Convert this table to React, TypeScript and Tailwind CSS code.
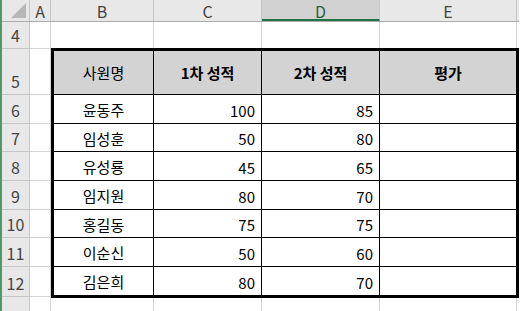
const rows = [
  { n: "6", name: "윤동주", a: 100, b: 85, h: "h-[29px]" },
  { n: "7", name: "임성훈", a: 50, b: 80, h: "h-[28px]" },
  { n: "8", name: "유성룡", a: 45, b: 65, h: "h-[29px]" },
  { n: "9", name: "임지원", a: 80, b: 70, h: "h-[29px]" },
  { n: "10", name: "홍길동", a: 75, b: 75, h: "h-[28px]" },
  { n: "11", name: "이순신", a: 50, b: 60, h: "h-[29px]" },
  { n: "12", name: "김은희", a: 80, b: 70, h: "h-[28px]" },
];

const rowHeads = [
  { n: "4", h: "h-[27px]" },
  { n: "5", h: "h-[46px]" },
  { n: "6", h: "h-[29px]" },
  { n: "7", h: "h-[28px]" },
  { n: "8", h: "h-[29px]" },
  { n: "9", h: "h-[29px]" },
  { n: "10", h: "h-[28px]" },
  { n: "11", h: "h-[29px]" },
  { n: "12", h: "h-[30px]" },
  { n: "", h: "h-[30px]" },
];

const font = { fontFamily: '"Noto Sans CJK KR", "Noto Sans", sans-serif' };

export default function App() {
  return (
    <div
      className="w-[521px] h-[311px] overflow-hidden bg-white flex border-l-2 border-[#4f9a68] text-[15px] leading-none"
      style={font}
    >
      <div className="flex flex-col">
        {/* column headers */}
        <div className="flex h-[31px] border-b border-[#ababab] bg-[#e8e8e8] text-[#444] text-[16px]">
          <div className="w-[28px] border-r border-[#c6c6c6] flex items-end justify-end p-[3px]">
            <svg width="15" height="15" viewBox="0 0 16 16">
              <polygon points="16,0 16,16 0,16" fill="#b7b7b7" />
            </svg>
          </div>
          <div className="w-[21px] border-r border-[#c6c6c6] flex items-center justify-center">A</div>
          <div className="w-[103px] border-r border-[#c6c6c6] flex items-center justify-center">B</div>
          <div className="w-[108px] border-r border-[#c6c6c6] flex items-center justify-center">C</div>
          <div className="w-[118px] border-r border-[#c6c6c6] bg-[#d2d2d2] border-b-2 border-b-[#217346] flex items-center justify-center text-[#2f5f3f] pt-[2px]">
            D
          </div>
          <div className="w-[137px] border-r border-[#c6c6c6] flex items-center justify-center">E</div>
          <div className="flex-1" />
        </div>

        <div className="flex">
          {/* row headers */}
          <div className="w-[28px] flex flex-col bg-[#e8e8e8] border-r border-[#c6c6c6] text-[#444] text-[16px]">
            {rowHeads.map((r, i) => (
              <div
                key={i}
                className={`${r.h} border-b border-[#c6c6c6] flex items-end justify-center pb-[5px]`}
              >
                {r.n}
              </div>
            ))}
          </div>

          {/* column A */}
          <div className="w-[21px] flex flex-col border-r border-[#d4d4d4]">
            {rowHeads.map((r, i) => (
              <div key={i} className={`${r.h} border-b border-[#d4d4d4]`} />
            ))}
          </div>

          <div className="flex flex-col">
            {/* row 4 */}
            <div className="flex h-[26px]">
              <div className="w-[103px] border-r border-[#d4d4d4]" />
              <div className="w-[108px] border-r border-[#d4d4d4]" />
              <div className="w-[118px] border-r border-[#d4d4d4]" />
              <div className="w-[137px] border-r border-[#d4d4d4]" />
            </div>

            {/* table B5:E12 */}
            <div className="w-[468px] border-[3px] border-black text-black">
              <div className="flex h-[44px] bg-[#d3d3d3] border-b border-black">
                <div className="w-[100px] border-r border-black flex items-center justify-center">사원명</div>
                <div className="w-[108px] border-r border-black flex items-center justify-center font-bold">1차 성적</div>
                <div className="w-[118px] border-r border-black flex items-center justify-center font-bold">2차 성적</div>
                <div className="w-[136px] flex items-center justify-center font-bold">평가</div>
              </div>
              {rows.map((r, i) => (
                <div
                  key={r.n}
                  className={`flex ${r.h} ${i < rows.length - 1 ? "border-b border-black" : ""}`}
                >
                  <div className="w-[100px] border-r border-black flex items-center justify-center pt-[1px]">
                    {r.name}
                  </div>
                  <div className="w-[108px] border-r border-black flex items-center justify-end pr-[6px] pt-[2px]">
                    {r.a}
                  </div>
                  <div className="w-[118px] border-r border-black flex items-center justify-end pr-[6px] pt-[2px]">
                    {r.b}
                  </div>
                  <div className="w-[136px]" />
                </div>
              ))}
            </div>

            {/* row 13 */}
            <div className="flex h-[30px]">
              <div className="w-[103px] border-r border-[#d4d4d4]" />
              <div className="w-[108px] border-r border-[#d4d4d4]" />
              <div className="w-[118px] border-r border-[#d4d4d4]" />
              <div className="w-[137px] border-r border-[#d4d4d4]" />
            </div>
          </div>
        </div>
      </div>
    </div>
  );
}
